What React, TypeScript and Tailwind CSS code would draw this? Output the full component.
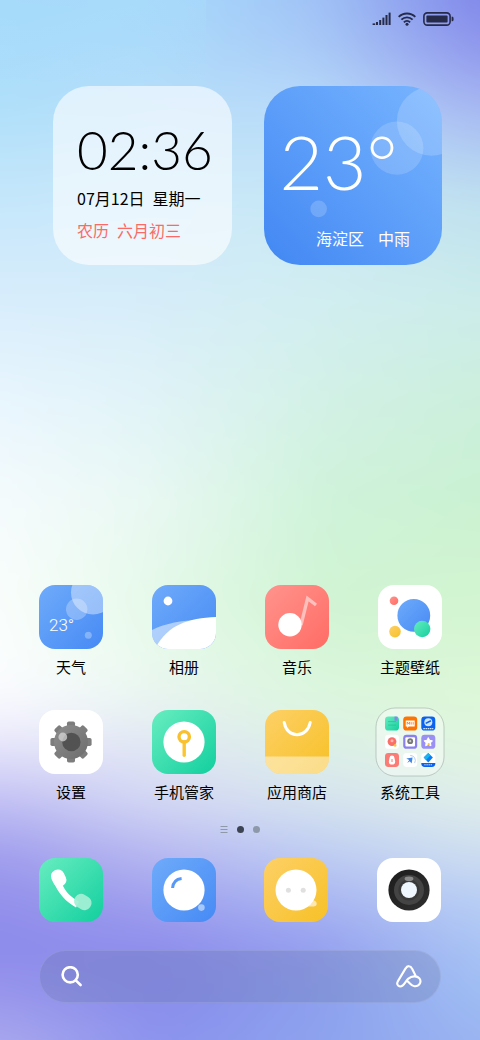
import type { ReactNode } from "react";

// vertical colour runs of the wallpaper, blended from left to right
const wallpaper = [
  {
    x: 0,
    stops: ["0 #a5dbfa", "100 #aedffa", "200 #c5e7fb", "300 #d8edfc", "400 #e9f6fe", "500 #f5fbfd", "600 #fafefc", "680 #fcfdff", "720 #f4f3fe", "760 #dedcf9", "800 #c2c0f4", "850 #a3a0ee", "900 #9290eb", "950 #8d8beb", "1000 #9a98ec", "1040 #aaa8ee"],
  },
  {
    x: 160,
    stops: ["0 #a8d9fb", "100 #b6ddf9", "200 #cae8fa", "300 #d6edf9", "400 #e0f3f7", "500 #e8f8f2", "600 #e4f9e8", "650 #e8faec", "700 #e8f4f0", "750 #e0e6f4", "800 #d4d8f4", "850 #b9bbf1", "900 #a1a1ee", "950 #8e8dec", "1000 #888ceb", "1040 #8b93ed"],
  },
  {
    x: 320,
    stops: ["0 #a0c2f6", "50 #a9caf7", "100 #b7d9f9", "200 #c8e8f5", "300 #d2eef1", "400 #d3f1e6", "500 #cff3da", "600 #d0f4d3", "700 #dcf6de", "750 #dcefe8", "800 #d6e3ef", "850 #c0cff3", "900 #a9b6f2", "950 #959fef", "1000 #8c9fee", "1040 #8da3ee"],
  },
  {
    x: 480,
    stops: ["0 #8087e9", "50 #9097ec", "100 #a3b2f1", "150 #b0cbf2", "200 #bfe0ef", "300 #cbecea", "400 #cbefdc", "500 #caf1d2", "600 #d3f5d0", "700 #ddf7d8", "750 #e0f5e0", "800 #dfeeea", "850 #cfdff0", "900 #b9cff4", "950 #a8c4f4", "1000 #9ebdf3", "1040 #9bb4f1"],
  },
];

function Wallpaper() {
  return (
    <svg className="absolute inset-0 -z-10 h-full w-full" viewBox="0 0 480 1040" preserveAspectRatio="none" aria-hidden="true">
      <defs>
        {wallpaper.map((col, i) => (
          <g key={col.x}>
            <linearGradient id={`wall-${i}`} gradientUnits="userSpaceOnUse" x1="0" y1="0" x2="0" y2="1040">
              {col.stops.map((stop) => {
                const [y, color] = stop.split(" ");
                return <stop key={y} offset={Number(y) / 1040} stopColor={color} />;
              })}
            </linearGradient>
            <linearGradient id={`fade-${i}`} gradientUnits="userSpaceOnUse" x1={col.x - 160} y1="0" x2={col.x} y2="0">
              <stop offset="0" stopColor="#fff" stopOpacity={i === 0 ? 1 : 0} />
              <stop offset="1" stopColor="#fff" />
            </linearGradient>
            <mask id={`mask-${i}`} maskUnits="userSpaceOnUse" x="-120" y="-120" width="720" height="1280">
              <rect x="-120" y="-120" width="720" height="1280" fill={`url(#fade-${i})`} />
            </mask>
          </g>
        ))}
        <filter id="wall-blur" filterUnits="userSpaceOnUse" x="-120" y="-120" width="720" height="1280" colorInterpolationFilters="sRGB">
          <feGaussianBlur stdDeviation="28 16" />
        </filter>
        <linearGradient id="wall-edge" x1="0" y1="0" x2="0" y2="1">
          <stop offset="0" stopColor="#a8dbfa" stopOpacity="0.5" />
          <stop offset="1" stopColor="#a8dbfa" stopOpacity="0" />
        </linearGradient>
      </defs>
      <g filter="url(#wall-blur)">
        {wallpaper.map((col, i) => (
          <rect key={col.x} x="-120" y="-120" width="720" height="1280" fill={`url(#wall-${i})`} mask={`url(#mask-${i})`} />
        ))}
      </g>
      <rect width="206" height="86" fill="url(#wall-edge)" />
    </svg>
  );
}

function Gradients() {
  const gradients = [
    { id: "blue", from: "#6fabfb", to: "#468af4" },
    { id: "red", from: "#ff948d", to: "#ff6c65" },
    { id: "green", from: "#68edc0", to: "#12cf9e" },
    { id: "yellow", from: "#fdd066", to: "#f7c127" },
    { id: "gray", from: "#8e8e8e", to: "#6c6c6c" },
    { id: "dark", from: "#1c1c1c", to: "#2f2f2f" },
  ];
  return (
    <svg className="absolute h-0 w-0" aria-hidden="true">
      <defs>
        {gradients.map((g) => (
          <linearGradient key={g.id} id={g.id} x1="0" y1="0" x2="1" y2="1">
            <stop offset="0" stopColor={g.from} />
            <stop offset="1" stopColor={g.to} />
          </linearGradient>
        ))}
      </defs>
    </svg>
  );
}

function Tile({ fill, children }: { fill: string; children: ReactNode }) {
  return (
    <svg className="h-16 w-16 overflow-hidden rounded-2xl" viewBox="0 0 64 64" fill="none" aria-hidden="true">
      <rect width="64" height="64" fill={fill} />
      {children}
    </svg>
  );
}

function WeatherIcon() {
  return (
    <Tile fill="url(#blue)">
      <circle cx="54" cy="7.5" r="22" fill="#fff" fillOpacity="0.4" />
      <circle cx="37.7" cy="24.3" r="10.7" fill="#fff" fillOpacity="0.27" />
      <circle cx="49.3" cy="50.3" r="3.5" fill="#fff" fillOpacity="0.3" />
      <text x="10" y="46" fill="#fff" fontSize="17" className="font-['Roboto',sans-serif] font-light">
        23°
      </text>
    </Tile>
  );
}

function AlbumIcon() {
  return (
    <Tile fill="url(#blue)">
      <circle cx="16" cy="16" r="4.4" fill="#fff" />
      <path d="M0 45C14 38 30 35.5 46 35L30 50L5 60L0 64Z" fill="#fff" fillOpacity="0.5" />
      <path d="M4 62C16 40 36 33 64 32V64H3Z" fill="#fff" />
    </Tile>
  );
}

function MusicIcon() {
  return (
    <Tile fill="url(#red)">
      <path d="M36 40L42.6 13.4L51 20" stroke="#fff" strokeOpacity="0.5" strokeWidth="3.4" />
      <circle cx="25" cy="39.7" r="11.7" fill="#fff" />
    </Tile>
  );
}

function ThemeIcon() {
  return (
    <Tile fill="#fff">
      <circle cx="35.8" cy="30.4" r="16.4" fill="url(#blue)" />
      <circle cx="44.2" cy="44" r="8.2" fill="url(#green)" />
      <circle cx="17" cy="46.6" r="5.8" fill="url(#yellow)" />
      <circle cx="16" cy="15.8" r="4.3" fill="url(#red)" />
    </Tile>
  );
}

function SettingsIcon() {
  return (
    <Tile fill="#fff">
      {[0, 45, 90, 135].map((angle) => (
        <rect key={angle} x="28" y="11.4" width="8" height="41.2" rx="1.8" fill="#7d7d7d" transform={`rotate(${angle} 32 32)`} />
      ))}
      <circle cx="32" cy="32" r="17" fill="url(#gray)" />
      <circle cx="32.4" cy="32" r="9.2" fill="#525252" />
      <circle cx="23.8" cy="27" r="4.4" fill="#d6d6d6" fillOpacity="0.75" />
    </Tile>
  );
}

function ManagerIcon() {
  return (
    <Tile fill="url(#green)">
      <circle cx="32" cy="32" r="20.6" fill="#fff" />
      <path d="M32.2 32V45.2" stroke="#fbc531" strokeWidth="3.4" strokeLinecap="round" />
      <circle cx="32.2" cy="26.8" r="5.2" stroke="#f9c02f" strokeWidth="3.4" />
    </Tile>
  );
}

function StoreIcon() {
  return (
    <Tile fill="url(#yellow)">
      <rect y="46.5" width="64" height="17.5" fill="#fff" fillOpacity="0.45" />
      <path d="M19.2 12.4C20.5 20 25.6 24.8 32 24.8S43.8 20 45.2 12.4" stroke="#fff" strokeWidth="3" strokeLinecap="round" />
    </Tile>
  );
}

function FolderIcon() {
  return (
    <svg className="h-16 w-16 overflow-visible" viewBox="0 0 64 64" fill="none" aria-hidden="true">
      <rect x="-2" y="-2" width="68" height="68" rx="19" fill="#fff" fillOpacity="0.4" stroke="#8f9f9a" strokeOpacity="0.5" />
      <g transform="translate(7 6.6)">
        <rect width="14" height="14" rx="3.4" fill="url(#green)" />
        <path d="M3 5H11M3 8.5H11" stroke="#1fb98a" strokeOpacity="0.6" />
        <rect x="9.5" width="3" height="4" fill="#8a86e8" />
      </g>
      <g transform="translate(25.2 6.6)">
        <rect width="14" height="14" rx="3.4" fill="#ff7300" />
        <path d="M2.5 3.8H11.5V9.8H5.5L4 11.4V9.8H2.5Z" fill="#fff" />
        <path d="M4 8V5.5L5.2 7L6.4 5.5V8M8 5.5V8M10 5.5V8" stroke="#ff7300" strokeWidth="0.8" />
      </g>
      <g transform="translate(43.3 6.6)">
        <rect width="14" height="14" rx="3.4" fill="#0b62ee" />
        <circle cx="7" cy="5.6" r="4" fill="#cfe4ff" />
        <path d="M4.4 6.8L9.6 4.2" stroke="#0b62ee" strokeWidth="1.6" />
        <path d="M2 12H12" stroke="#cfe4ff" strokeWidth="1.4" strokeDasharray="1.6 0.6" />
      </g>
      <g transform="translate(7 24.8)">
        <rect width="14" height="14" rx="3.4" fill="#fff" />
        <circle cx="7" cy="6.8" r="4.4" fill="#fb6f69" />
        <circle cx="7" cy="6" r="1.5" fill="#ffb6b0" />
        <circle cx="10.2" cy="10.6" r="1.3" fill="#f9c440" />
      </g>
      <g transform="translate(25.2 24.8)">
        <rect width="14" height="14" rx="3.4" fill="#8b80ee" />
        <rect x="2.2" y="2.4" width="9.6" height="9.4" rx="1" fill="#fff" />
        <circle cx="7" cy="6.4" r="2.9" fill="#777" />
        <circle cx="7" cy="6.4" r="1.1" fill="#ccc" />
      </g>
      <g transform="translate(43.3 24.8)">
        <rect width="14" height="14" rx="3.4" fill="#9a8ff3" />
        <path d="M7 2.8L8.3 5.5L11.2 6L9.2 8.1L9.7 11L7 9.7L4.3 11L4.8 8.1L2.8 6L5.7 5.5Z" fill="#fff" stroke="#fff" strokeLinejoin="round" />
        <circle cx="7.4" cy="9.4" r="1.1" fill="#f9c440" />
      </g>
      <g transform="translate(7 43)">
        <rect width="14" height="14" rx="3.4" fill="#fb7b76" />
        <path d="M4.6 4.8A2.4 2.4 0 0 1 9.4 4.8L10.2 8.4A3.2 3.2 0 0 1 3.8 8.4Z" fill="#fff" />
        <path d="M7 6V9" stroke="#fb7b76" />
      </g>
      <g transform="translate(25.2 43)">
        <rect width="14" height="14" rx="3.4" fill="#fff" />
        <path d="M3 5.4L9.4 4.6L8.4 10.6L6.6 8.2L4 10L6 7Z" fill="#3f86e8" />
        <path d="M7 2.4A5 5 0 0 1 11.4 10" stroke="#a8c9f6" strokeWidth="0.9" />
      </g>
      <g transform="translate(43.3 43)">
        <rect width="14" height="14" rx="3.4" fill="#fff" />
        <path d="M7 0L11.6 4.6L7 9.4L2.4 4.6Z" fill="#0b7cf5" />
        <path d="M7 0L9.2 2.2L4.7 6.9L2.4 4.6Z" fill="#14b6f2" />
        <path d="M0 10H14V10.6A3.4 3.4 0 0 1 10.6 14H3.4A3.4 3.4 0 0 1 0 10.6Z" fill="#0b62ee" />
        <path d="M3 11.8H11" stroke="#cfe4ff" strokeDasharray="1.4 0.7" />
      </g>
    </svg>
  );
}

function PhoneIcon() {
  return (
    <Tile fill="url(#green)">
      <path d="M14.6 24C19 35 26.5 43.5 37 49.4L40 43.6C32.5 40 26 33.5 22.6 25Z" fill="#fff" />
      <rect x="12.8" y="11.4" width="13.6" height="17.4" rx="6.4" fill="#fff" transform="rotate(-26 19.6 20)" />
      <rect x="35" y="37" width="17.6" height="14" rx="6.4" fill="#a3efd5" fillOpacity="0.94" transform="rotate(32 43.8 44)" />
    </Tile>
  );
}

function BrowserIcon() {
  return (
    <Tile fill="url(#blue)">
      <circle cx="32" cy="32" r="20.6" fill="#fff" />
      <path d="M20.6 30C21 24.6 24.4 21 29.6 20.4" stroke="#5699f8" strokeWidth="3" />
      <circle cx="49.4" cy="49.6" r="3.3" fill="#fff" fillOpacity="0.5" />
    </Tile>
  );
}

function MessageIcon() {
  return (
    <Tile fill="url(#yellow)">
      <path d="M41 48C44 47 46 44 48 42.4C51 42 53.4 44.5 52.6 46.5C52 48.8 49 49 41 48Z" fill="#fff" fillOpacity="0.6" />
      <circle cx="32" cy="32" r="20.5" fill="#fff" />
      <circle cx="24.4" cy="32.2" r="2.5" fill="#e0e0e0" />
      <circle cx="39.2" cy="32.2" r="2.5" fill="#e0e0e0" />
    </Tile>
  );
}

function CameraIcon() {
  return (
    <Tile fill="#fff">
      <circle cx="32" cy="32" r="20.6" fill="url(#dark)" />
      <circle cx="32" cy="32" r="15" fill="#444" />
      <circle cx="32" cy="32" r="10.6" fill="#383838" />
      <ellipse cx="32" cy="20.8" rx="4.4" ry="2.4" fill="#8a8a8a" />
      <circle cx="32" cy="32" r="8" fill="#eff6fd" />
    </Tile>
  );
}

function StatusBar() {
  return (
    <div className="flex h-[38px] items-center justify-end gap-[7px] pr-[26px] text-[#262b4a]">
      <svg width="19" height="14" viewBox="0 0 19 14" fill="currentColor" role="img" aria-label="信号">
        <rect x="0.6" y="11.4" width="2.6" height="1.6" />
        <rect x="4" y="10" width="2" height="3" />
        <rect x="7.2" y="8" width="2" height="5" />
        <rect x="10.4" y="5.6" width="2" height="7.4" />
        <rect x="13.5" y="3" width="2" height="10" />
        <rect x="16.6" y="0.6" width="2" height="12.4" />
      </svg>
      <svg width="18" height="14" viewBox="0 0 18 14" fill="none" stroke="currentColor" strokeWidth="1.9" role="img" aria-label="WLAN">
        <path d="M0.7 4.9C5.3 0.3 12.7 0.3 17.3 4.9" />
        <path d="M3.4 7.7C6.5 4.6 11.5 4.6 14.6 7.7" />
        <path d="M5.9 10.3C7.6 8.6 10.4 8.6 12.1 10.3" />
        <circle cx="9" cy="12.2" r="1.5" fill="currentColor" stroke="none" />
      </svg>
      <svg width="31" height="14" viewBox="0 0 31 14" fill="none" role="img" aria-label="电量">
        <rect x="0.9" y="0.9" width="26.2" height="12.2" rx="3.4" stroke="currentColor" strokeWidth="1.6" />
        <rect x="3.4" y="3.4" width="21.2" height="7.2" rx="1" fill="currentColor" />
        <path d="M28.6 4.8H29.4C30.2 4.8 30.6 5.4 30.6 7S30.2 9.2 29.4 9.2H28.6Z" fill="currentColor" />
      </svg>
    </div>
  );
}

function ClockWidget() {
  return (
    <section className="aspect-square rounded-[36px] bg-white/60 pt-9 pl-6 text-black">
      <time className="block font-['Lato',sans-serif] text-[53px] leading-[56px] font-light">02:36</time>
      <p className="mt-2 flex gap-2 text-base leading-6 whitespace-nowrap">
        <span>07月12日</span>
        <span>星期一</span>
      </p>
      <p className="mt-2 flex gap-2 text-base leading-6 whitespace-nowrap text-[#fb6a66]">
        <span>农历</span>
        <span>六月初三</span>
      </p>
    </section>
  );
}

function WeatherWidget() {
  return (
    <section className="relative isolate aspect-square overflow-hidden rounded-[36px] bg-linear-to-tr from-[#4287f3] to-[#78b5ff] pt-[38px] text-white">
      <svg className="absolute inset-0 -z-10 h-full w-full" viewBox="0 0 178 178" aria-hidden="true">
        <circle cx="167" cy="35" r="34.5" fill="#fff" fillOpacity="0.18" />
        <circle cx="132.5" cy="62" r="26.5" fill="#fff" fillOpacity="0.16" />
        <circle cx="54.5" cy="122.5" r="8.3" fill="#fff" fillOpacity="0.18" />
      </svg>
      <p className="pl-4 font-['Lato',sans-serif] text-[75px] leading-[74px] font-light">23°</p>
      <p className="mt-7 flex justify-end gap-[14px] pr-8 text-base leading-6 whitespace-nowrap">
        <span>海淀区</span>
        <span>中雨</span>
      </p>
    </section>
  );
}

export default function App() {
  const apps = [
    { name: "天气", icon: <WeatherIcon /> },
    { name: "相册", icon: <AlbumIcon /> },
    { name: "音乐", icon: <MusicIcon /> },
    { name: "主题壁纸", icon: <ThemeIcon /> },
    { name: "设置", icon: <SettingsIcon /> },
    { name: "手机管家", icon: <ManagerIcon /> },
    { name: "应用商店", icon: <StoreIcon /> },
    { name: "系统工具", icon: <FolderIcon /> },
  ];

  const dock = [
    { name: "电话", icon: <PhoneIcon /> },
    { name: "浏览器", icon: <BrowserIcon /> },
    { name: "短信", icon: <MessageIcon /> },
    { name: "相机", icon: <CameraIcon /> },
  ];

  return (
    <main className="relative isolate flex min-h-screen flex-col overflow-hidden font-['Noto_Sans_CJK_SC',sans-serif]">
      <Wallpaper />
      <Gradients />
      <StatusBar />

      <div className="mt-12 grid grid-cols-2 gap-8 pr-[38px] pl-[53px]">
        <ClockWidget />
        <WeatherWidget />
      </div>

      <div className="mt-auto grid grid-cols-[repeat(4,64px)] justify-between gap-y-[33px] pt-10 pr-[38px] pl-[39px]">
        {apps.map((app) => (
          <button key={app.name} type="button" className="flex flex-col items-center">
            {app.icon}
            <span className="mt-2 text-[15px] leading-5 whitespace-nowrap text-black">{app.name}</span>
          </button>
        ))}
      </div>

      <div className="mt-[23px] flex items-center justify-center gap-[9px]">
        <svg width="8" height="8" viewBox="0 0 8 8" stroke="#8f98a8" aria-hidden="true">
          <path d="M0.5 1.5H7.5M0.5 4.5H7.5M0.5 7.5H7.5" />
        </svg>
        <span className="h-[7px] w-[7px] rounded-full bg-[#3c4352]" />
        <span className="h-[7px] w-[7px] rounded-full bg-[#8d99ab]" />
      </div>

      <nav className="mt-[25px] flex justify-between px-[39px]">
        {dock.map((app) => (
          <button key={app.name} type="button" aria-label={app.name}>
            {app.icon}
          </button>
        ))}
      </nav>

      <form role="search" className="mx-[39px] mt-7 mb-[37px] flex h-[53px] items-center rounded-full border border-white/10 bg-[#6070a0]/25 pr-[18px] pl-[21px] text-white">
        <svg width="22" height="22" viewBox="0 0 22 22" fill="none" stroke="currentColor" strokeWidth="2.6" strokeLinecap="round" aria-hidden="true">
          <circle cx="9.2" cy="8.8" r="7.6" />
          <path d="M14.8 14.4L19.6 19" />
        </svg>
        <input type="search" aria-label="搜索" className="min-w-0 flex-1 bg-transparent px-3 text-base outline-none" />
        <button type="button" aria-label="小爱同学">
          <svg width="26" height="24" viewBox="0 0 26 24" fill="none" stroke="currentColor" strokeWidth="2.1" strokeLinecap="round" strokeLinejoin="round" aria-hidden="true">
            <path d="M20 11.4L16 3.6C14.6 0.4 11.2 0.4 9.6 3.4L1.8 16.4C-0.2 20 3.6 23 6.8 20.4C8.8 18.6 10 15.8 12.4 13.6C15.6 11 21 10.4 23.4 13.4C26 16.8 23.4 21.6 18.4 21.2C14.8 20.8 14 17.6 11 16" />
          </svg>
        </button>
      </form>
    </main>
  );
}
